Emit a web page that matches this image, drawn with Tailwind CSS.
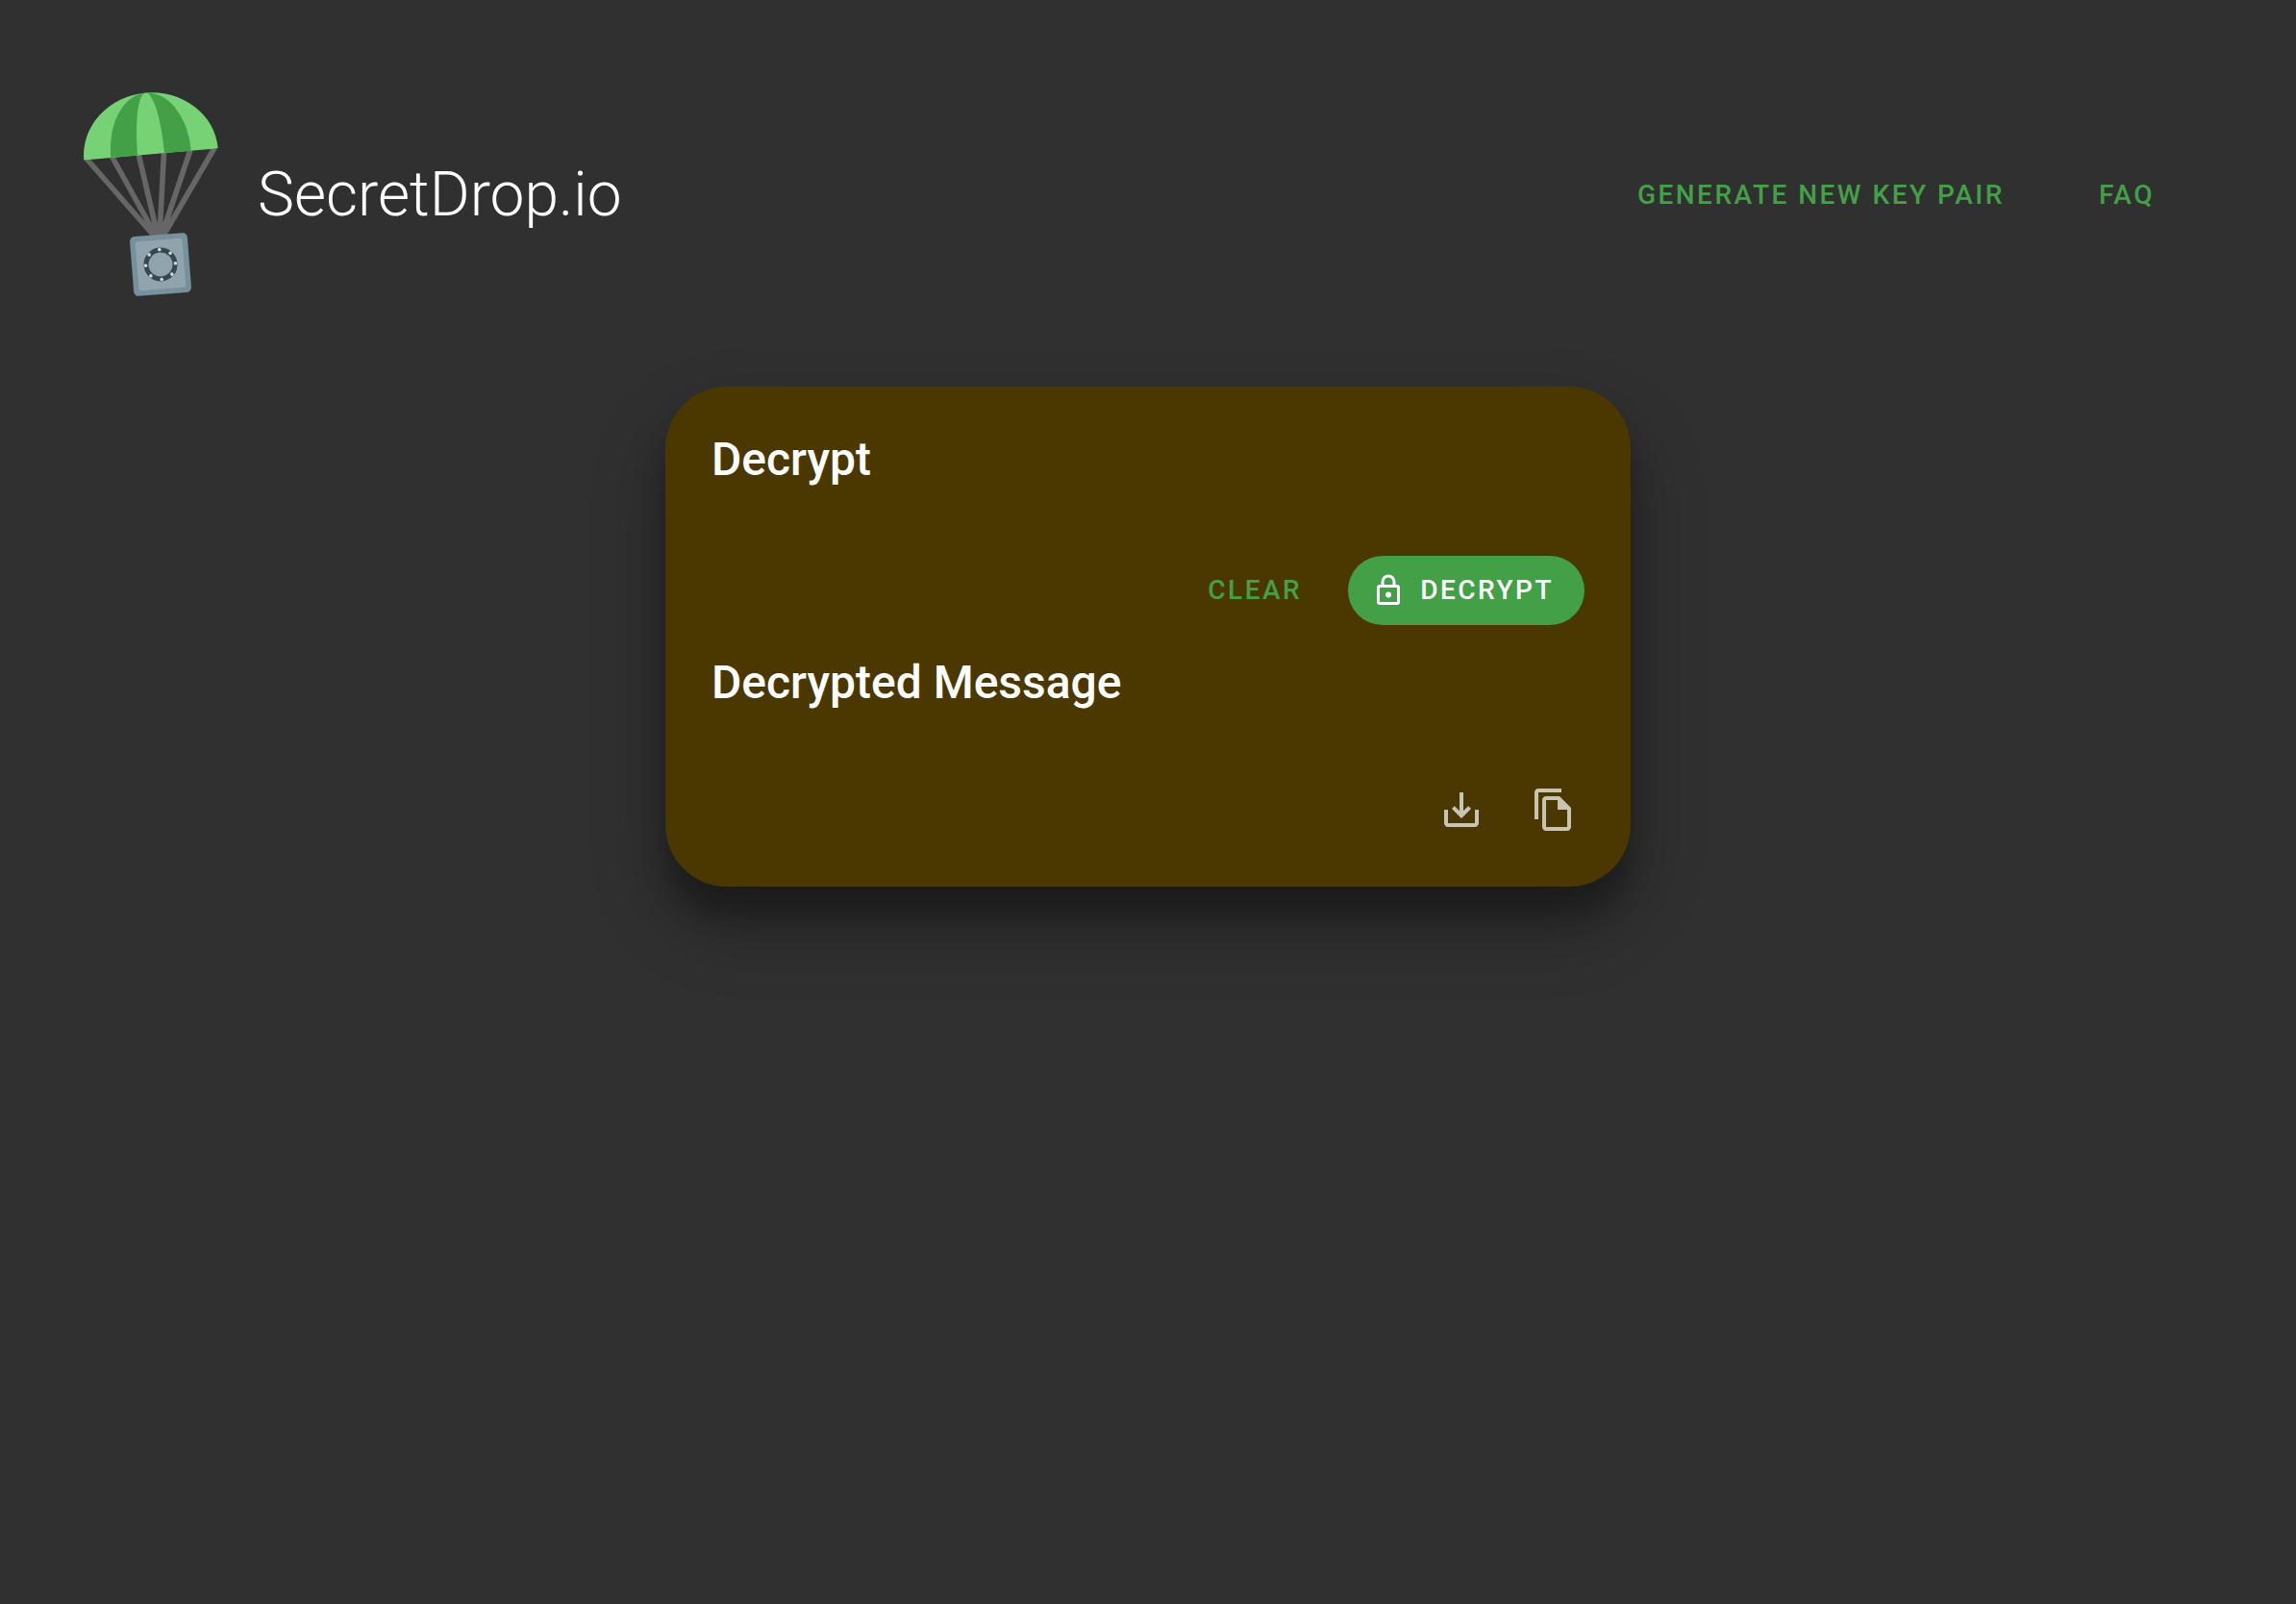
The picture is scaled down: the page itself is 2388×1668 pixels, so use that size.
<!DOCTYPE html>
<html lang="en">
<head>
<meta charset="utf-8">
<meta name="viewport" content="width=device-width, initial-scale=1">
<title>SecretDrop.io</title>
<script src="https://cdn.jsdelivr.net/npm/@tailwindcss/browser@4"></script>
</head>
<body class="min-h-screen bg-[#303030] font-[Roboto,sans-serif] text-white">
<header class="flex items-center justify-between pt-[91px] pr-[115px] pb-[87px] pl-20">
  <a href="#" class="flex items-center gap-8">
    <svg class="h-56 w-[156px] shrink-0" viewBox="80 91 156 224" aria-hidden="true">
      <!-- ropes -->
      <g stroke="#666" stroke-width="5.600" fill="none">
        <path d="M90 165L160 245M116 162L162 245M144 160L164 245M170.500 158L166 245M198 156L168 245M223 154L170 245"/>
      </g>
      <!-- canopy -->
      <g transform="translate(157 160.300) rotate(-5)">
        <path fill="#76d275" d="M-70 0A70 64 0 0 1 70 0Z"/>
        <path fill="#43a047" d="M-42 0A42 64 0 0 1 0 -64A14 64 0 0 0 -14 0ZM14 0A14 64 0 0 0 0 -64A42 64 0 0 1 42 0Z"/>
      </g>
      <!-- safe -->
      <g transform="translate(167 275) rotate(-4.500)">
        <rect x="-30" y="-31" width="60" height="62" rx="5" fill="#78909c"/>
        <rect x="-24.500" y="-25.500" width="49" height="51" rx="2.500" fill="#90a4ae"/>
        <circle r="15" cy="0" fill="none" stroke="#37474f" stroke-width="5"/>
        <g fill="#cfd8dc">
          <circle cy="-15.500" r="1.800"/><circle cx="11" cy="-11" r="1.800"/><circle cx="15.500" r="1.800"/><circle cx="11" cy="11" r="1.800"/>
          <circle cy="15.500" r="1.800"/><circle cx="-11" cy="11" r="1.800"/><circle cx="-15.500" r="1.800"/><circle cx="-11" cy="-11" r="1.800"/>
        </g>
      </g>
    </svg>
    <h1 class="text-[64px] leading-none font-light">SecretDrop.io</h1>
  </a>
  <nav class="flex items-center gap-[34px] text-[28px] font-medium tracking-[0.089em] text-[#43a047] uppercase">
    <a href="#generate" class="flex h-[72px] items-center px-8">Generate new key pair</a>
    <a href="#faq" class="flex h-[72px] items-center px-8">FAQ</a>
  </nav>
</header>
<main class="px-12">
  <section class="mx-auto w-full max-w-[1004px] rounded-[64px] bg-[#4b3800] p-12 shadow-[0_38px_76px_rgba(0,0,0,0.3),0_30px_24px_rgba(0,0,0,0.22)]">
    <h2 class="text-[48px] leading-[56px] font-medium">Decrypt</h2>
    <div class="mt-18 flex justify-end gap-4 text-[28px] font-medium tracking-[0.089em]">
      <button type="button" class="h-[72px] rounded-full px-8 text-[#43a047] uppercase">Clear</button>
      <button type="button" class="flex h-[72px] items-center gap-[15px] rounded-full bg-[#43a047] pr-8 pl-6 uppercase">
        <svg class="size-9" viewBox="0 0 24 24" fill="currentColor" aria-hidden="true"><path d="M12,17C10.89,17 10,16.1 10,15C10,13.89 10.89,13 12,13A2,2 0 0,1 14,15A2,2 0 0,1 12,17M18,20V10H6V20H18M18,8A2,2 0 0,1 20,10V20A2,2 0 0,1 18,22H6C4.89,22 4,21.1 4,20V10C4,8.89 4.89,8 6,8H7V6A5,5 0 0,1 12,1A5,5 0 0,1 17,6V8H18M12,3A3,3 0 0,0 9,6V8H15V6A3,3 0 0,0 12,3Z"/></svg>
        Decrypt
      </button>
    </div>
    <h2 class="mt-8 text-[48px] leading-[56px] font-medium">Decrypted Message</h2>
    <div class="mt-18 flex justify-end gap-8 text-white/70">
      <button type="button" aria-label="Download message" class="flex size-16 items-center justify-center rounded-full">
        <svg class="size-12" viewBox="0 0 24 24" fill="currentColor" aria-hidden="true"><path d="M19 12v7H5v-7H3v7c0 1.1.9 2 2 2h14c1.100 0 2-.9 2-2v-7h-2zm-6 .67l2.590-2.580L17 11.500l-5 5-5-5 1.410-1.410L11 12.670V3h2v9.670z"/></svg>
      </button>
      <button type="button" aria-label="Copy message" class="flex size-16 items-center justify-center rounded-full">
        <svg class="size-12" viewBox="0 0 24 24" fill="currentColor" aria-hidden="true"><path d="M16 1H4c-1.100 0-2 .9-2 2v14h2V3h12V1zM15 5H8c-1.100 0-2 .9-2 2v14c0 1.100.9 2 2 2h11c1.100 0 2-.9 2-2V11l-6-6zM8 21V7h6v5h5v9H8z"/></svg>
      </button>
    </div>
  </section>
</main>
</body>
</html>
